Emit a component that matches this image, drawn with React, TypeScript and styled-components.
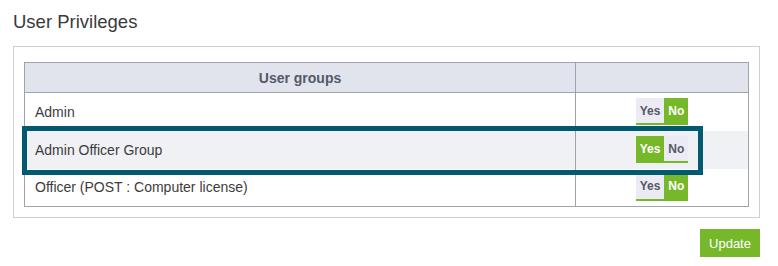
import React, { useState } from 'react';
import styled, { createGlobalStyle } from 'styled-components';

const GlobalStyle = createGlobalStyle`
  html, body {
    margin: 0;
    padding: 0;
    background: #ffffff;
    font-family: "Liberation Sans", Arial, sans-serif;
  }
`;

type Group = { name: string; allowed: boolean };

const initialGroups: Group[] = [
  { name: 'Admin', allowed: false },
  { name: 'Admin Officer Group', allowed: true },
  { name: 'Officer (POST : Computer license)', allowed: false },
];

const Page = styled.div`
  width: 747px;
  padding: 11px 18px 0 13px;
`;

const Title = styled.h2`
  margin: 0 0 13px 0;
  font-size: 18.5px;
  line-height: 22px;
  font-weight: normal;
  color: #3a3a3a;
`;

const Panel = styled.div`
  border: 1px solid #cfcfcf;
  padding: 15px 10px 10px 10px;
`;

const TableWrap = styled.div`
  position: relative;
`;

const Table = styled.table`
  width: 100%;
  border-collapse: collapse;
  border: 1px solid #9fa3ae;
  table-layout: fixed;
`;

const HeadCell = styled.th`
  height: 29px;
  padding: 0;
  background: #e1e4ec;
  border: 1px solid #9fa3ae;
  font-size: 14px;
  font-weight: bold;
  color: #55596a;
  text-align: center;
  &:first-child {
    width: 550px;
  }
`;

const Row = styled.tr<{ $striped: boolean }>`
  background: ${(p) => (p.$striped ? '#f0f1f5' : '#ffffff')};
  height: 38px;
`;

const NameCell = styled.td`
  padding: 0 0 0 10px;
  font-size: 14px;
  color: #3c3c3c;
  border-right: 1px solid #9fa3ae;
`;

const ToggleCell = styled.td`
  padding: 0;
  text-align: center;
`;

const Toggle = styled.div`
  display: inline-flex;
  vertical-align: middle;
  border-bottom: 2px solid #77b82a;
`;

const Option = styled.span<{ $active: boolean }>`
  display: inline-flex;
  align-items: center;
  justify-content: center;
  height: 25px;
  padding: 0 4px;
  font-size: 12px;
  font-weight: bold;
  cursor: pointer;
  background: ${(p) => (p.$active ? '#77b82a' : '#ecebf3')};
  color: ${(p) => (p.$active ? '#ffffff' : '#55596a')};
`;

// annotation frame drawn over the selected row
const Highlight = styled.div`
  position: absolute;
  left: -2px;
  top: 64px;
  width: 671px;
  height: 39px;
  border: 5px solid #015a6f;
  pointer-events: none;
`;

const Footer = styled.div`
  display: flex;
  justify-content: flex-end;
  margin-top: 11px;
`;

const UpdateButton = styled.button`
  width: 60px;
  height: 28px;
  padding: 0;
  border: none;
  background: #77b82a;
  color: #ffffff;
  font-family: "Liberation Sans", Arial, sans-serif;
  font-size: 13px;
  cursor: pointer;
`;

function App() {
  const [groups, setGroups] = useState(initialGroups);

  const setAllowed = (index: number, allowed: boolean) => {
    setGroups(groups.map((g, i) => (i === index ? { ...g, allowed } : g)));
  };

  return (
    <Page>
      <GlobalStyle />
      <Title>User Privileges</Title>
      <Panel>
        <TableWrap>
          <Table>
            <thead>
              <tr>
                <HeadCell>User groups</HeadCell>
                <HeadCell />
              </tr>
            </thead>
            <tbody>
              {groups.map((group, index) => (
                <Row key={group.name} $striped={index % 2 === 1}>
                  <NameCell>{group.name}</NameCell>
                  <ToggleCell>
                    <Toggle>
                      <Option $active={group.allowed} onClick={() => setAllowed(index, true)}>
                        Yes
                      </Option>
                      <Option $active={!group.allowed} onClick={() => setAllowed(index, false)}>
                        No
                      </Option>
                    </Toggle>
                  </ToggleCell>
                </Row>
              ))}
            </tbody>
          </Table>
          <Highlight />
        </TableWrap>
      </Panel>
      <Footer>
        <UpdateButton>Update</UpdateButton>
      </Footer>
    </Page>
  );
}

export default App;
